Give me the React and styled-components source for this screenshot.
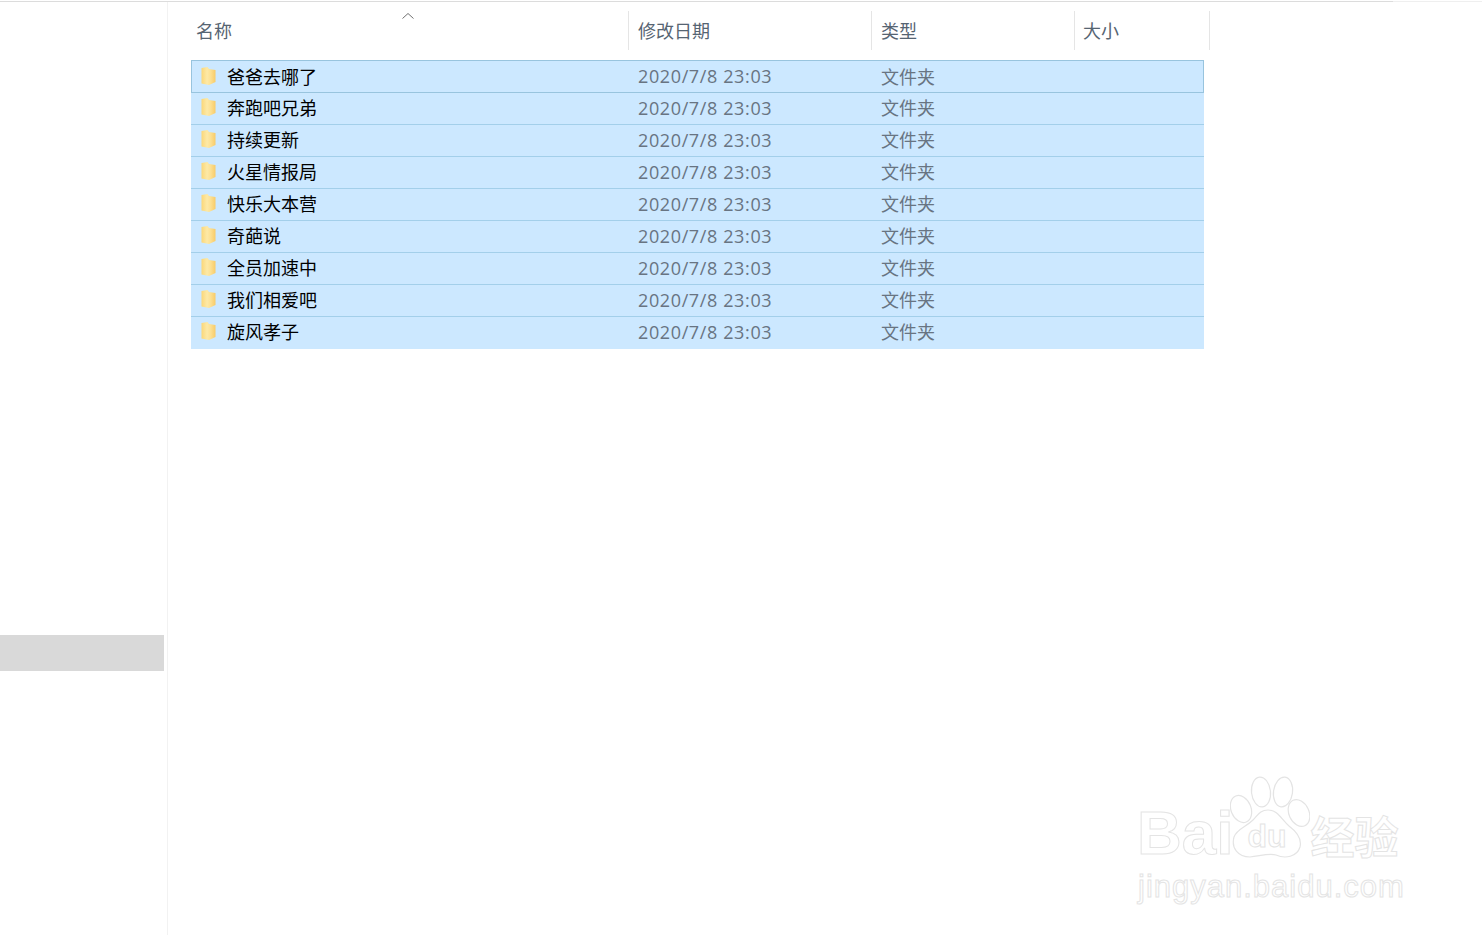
import styled, { createGlobalStyle } from "styled-components";

const folders = [
  "爸爸去哪了",
  "奔跑吧兄弟",
  "持续更新",
  "火星情报局",
  "快乐大本营",
  "奇葩说",
  "全员加速中",
  "我们相爱吧",
  "旋风孝子",
];

const cjk = `"Open Sans", "Noto Sans CJK SC", sans-serif`;

const GlobalStyle = createGlobalStyle`
  html, body {
    margin: 0;
    padding: 0;
    background: #fff;
    overflow: hidden;
  }
`;

const Page = styled.div`
  position: relative;
  width: 1482px;
  height: 935px;
  overflow: hidden;
  font-family: ${cjk};
  font-size: 18px;
`;

const TopLine = styled.div`
  height: 1px;
  margin-top: 1px;
  background: linear-gradient(to right, #dcdcdc 1393px, #efefef 1393px);
`;

const Body = styled.div`
  display: flex;
  height: 933px;
`;

const Sidebar = styled.div`
  width: 164px;
  flex-shrink: 0;
  padding-top: 633px;
  box-sizing: border-box;
`;

const SidebarItem = styled.div`
  height: 36px;
  background: #d9d9d9;
`;

const Main = styled.div`
  margin-left: 3px;
  padding-left: 23px;
  border-left: 1px solid #f2f2f2;
  width: 1040px;
`;

const Header = styled.div`
  display: grid;
  grid-template-columns: 438px 243px 203px 135px;
  height: 39px;
  margin-top: 9px;
  margin-bottom: 10px;
`;

const HeaderCell = styled.div`
  position: relative;
  display: flex;
  align-items: center;
  padding-left: ${(p) => p.$pad}px;
  padding-bottom: 2px;
  border-right: 1px solid #e5e5e5;
  color: #566472;
`;

const SortArrow = styled.svg`
  position: absolute;
  left: 210px;
  top: 1px;
`;

const Table = styled.div`
  width: 1013px;
  border-bottom: 1px solid #cce8ff;
`;

const Row = styled.div`
  display: grid;
  grid-template-columns: 437px 243px 333px;
  align-items: center;
  height: 32px;
  box-sizing: border-box;
  padding-bottom: 3px;
  background: #cce8ff;
  border-top: 1px solid #a3cfea;
  ${(p) =>
    p.$first &&
    `
    height: 33px;
    margin-bottom: -1px;
    position: relative;
    z-index: 1;
    border-top-color: #98c4de;
    box-shadow: inset 1px 0 #98c4de, inset -1px 0 #98c4de, inset 0 -1px #98c4de;
  `}
`;

const NameCell = styled.div`
  display: flex;
  align-items: center;
  gap: 9px;
  padding-left: 9px;
  color: #000;
  white-space: nowrap;
`;

const DateCell = styled.div`
  padding-left: 10px;
  padding-top: 1px;
  color: #687482;
  letter-spacing: 0.62px;
  white-space: nowrap;
`;

const TypeCell = styled.div`
  padding-left: 10px;
  color: #687482;
`;

const Watermark = styled.div`
  position: absolute;
  left: 1137px;
  top: 772px;
  width: 274px;
  color: #fff;
  -webkit-text-stroke: 1px #e4e4e4;
  font-family: "Liberation Sans", sans-serif;
`;

const LogoRow = styled.div`
  display: flex;
  align-items: flex-end;
  height: 91px;
`;

const BaiText = styled.span`
  font-size: 62px;
  font-weight: 700;
  line-height: 60px;
`;

const PawBox = styled.div`
  position: relative;
  width: 80px;
  height: 91px;
  margin-left: -3px;
`;

const DuText = styled.span`
  position: absolute;
  left: 17px;
  bottom: 12px;
  font-size: 32px;
  line-height: 30px;
  font-weight: 700;
`;

const JingText = styled.span`
  font-size: 44px;
  font-weight: 700;
  line-height: 56px;
  font-family: "Noto Sans CJK SC", sans-serif;
`;

const DomainText = styled.div`
  font-size: 31px;
  line-height: 36px;
  margin-top: 6px;
  margin-left: 1px;
  letter-spacing: 1px;
  white-space: nowrap;
`;

const FolderIcon = () => (
  <svg width="18" height="20" viewBox="0 0 18 20">
    <defs>
      <linearGradient id="folderFill" x1="0" y1="0" x2="1" y2="0">
        <stop offset="0" stopColor="#fbd778" />
        <stop offset="0.4" stopColor="#fde9a6" />
        <stop offset="0.65" stopColor="#fce092" />
        <stop offset="1" stopColor="#f8cb68" />
      </linearGradient>
    </defs>
    <path d="M1.5 2 L7.5 1 L9 3 L15.5 4 L15.5 16 L9 19 L1.5 17.5 Z" fill="url(#folderFill)" />
  </svg>
);

const PawIcon = () => (
  <svg width="80" height="91" viewBox="0 0 80 91" style={{ position: "absolute", left: 0, top: 0 }}>
    <g fill="#fff" stroke="#e4e4e4" strokeWidth="1.2">
      <ellipse cx="11" cy="37" rx="10" ry="14" transform="rotate(-22 11 37)" />
      <ellipse cx="31" cy="20" rx="9.5" ry="15" transform="rotate(-6 31 20)" />
      <ellipse cx="53" cy="20" rx="9.5" ry="15" transform="rotate(8 53 20)" />
      <ellipse cx="69" cy="41" rx="10" ry="14" transform="rotate(-25 69 41)" />
      <path d="M38 38 C48 38 51 47 59 54 C67 60 72 67 70 75 C67 85 55 87 46 83 C39 81 30 84 20 85 C8 85 1 76 4 65 C7 57 16 55 23 48 C28 43 30 38 38 38 Z" />
    </g>
  </svg>
);

export default function App() {
  return (
    <Page>
      <GlobalStyle />
      <TopLine />
      <Body>
        <Sidebar>
          <SidebarItem />
        </Sidebar>
        <Main>
          <Header>
            <HeaderCell $pad={5}>
              名称
              <SortArrow width="14" height="8" viewBox="0 0 14 8">
                <path d="M1.5 6.5 L7 1.5 L12.5 6.5" fill="none" stroke="#707070" strokeWidth="1" />
              </SortArrow>
            </HeaderCell>
            <HeaderCell $pad={9}>修改日期</HeaderCell>
            <HeaderCell $pad={9}>类型</HeaderCell>
            <HeaderCell $pad={8}>大小</HeaderCell>
          </Header>
          <Table>
            {folders.map((name, i) => (
              <Row key={name} $first={i === 0}>
                <NameCell>
                  <FolderIcon />
                  {name}
                </NameCell>
                <DateCell>2020/7/8 23:03</DateCell>
                <TypeCell>文件夹</TypeCell>
              </Row>
            ))}
          </Table>
        </Main>
      </Body>
      <Watermark>
        <LogoRow>
          <BaiText>Bai</BaiText>
          <PawBox>
            <PawIcon />
            <DuText>du</DuText>
          </PawBox>
          <JingText>经验</JingText>
        </LogoRow>
        <DomainText>jingyan.baidu.com</DomainText>
      </Watermark>
    </Page>
  );
}
